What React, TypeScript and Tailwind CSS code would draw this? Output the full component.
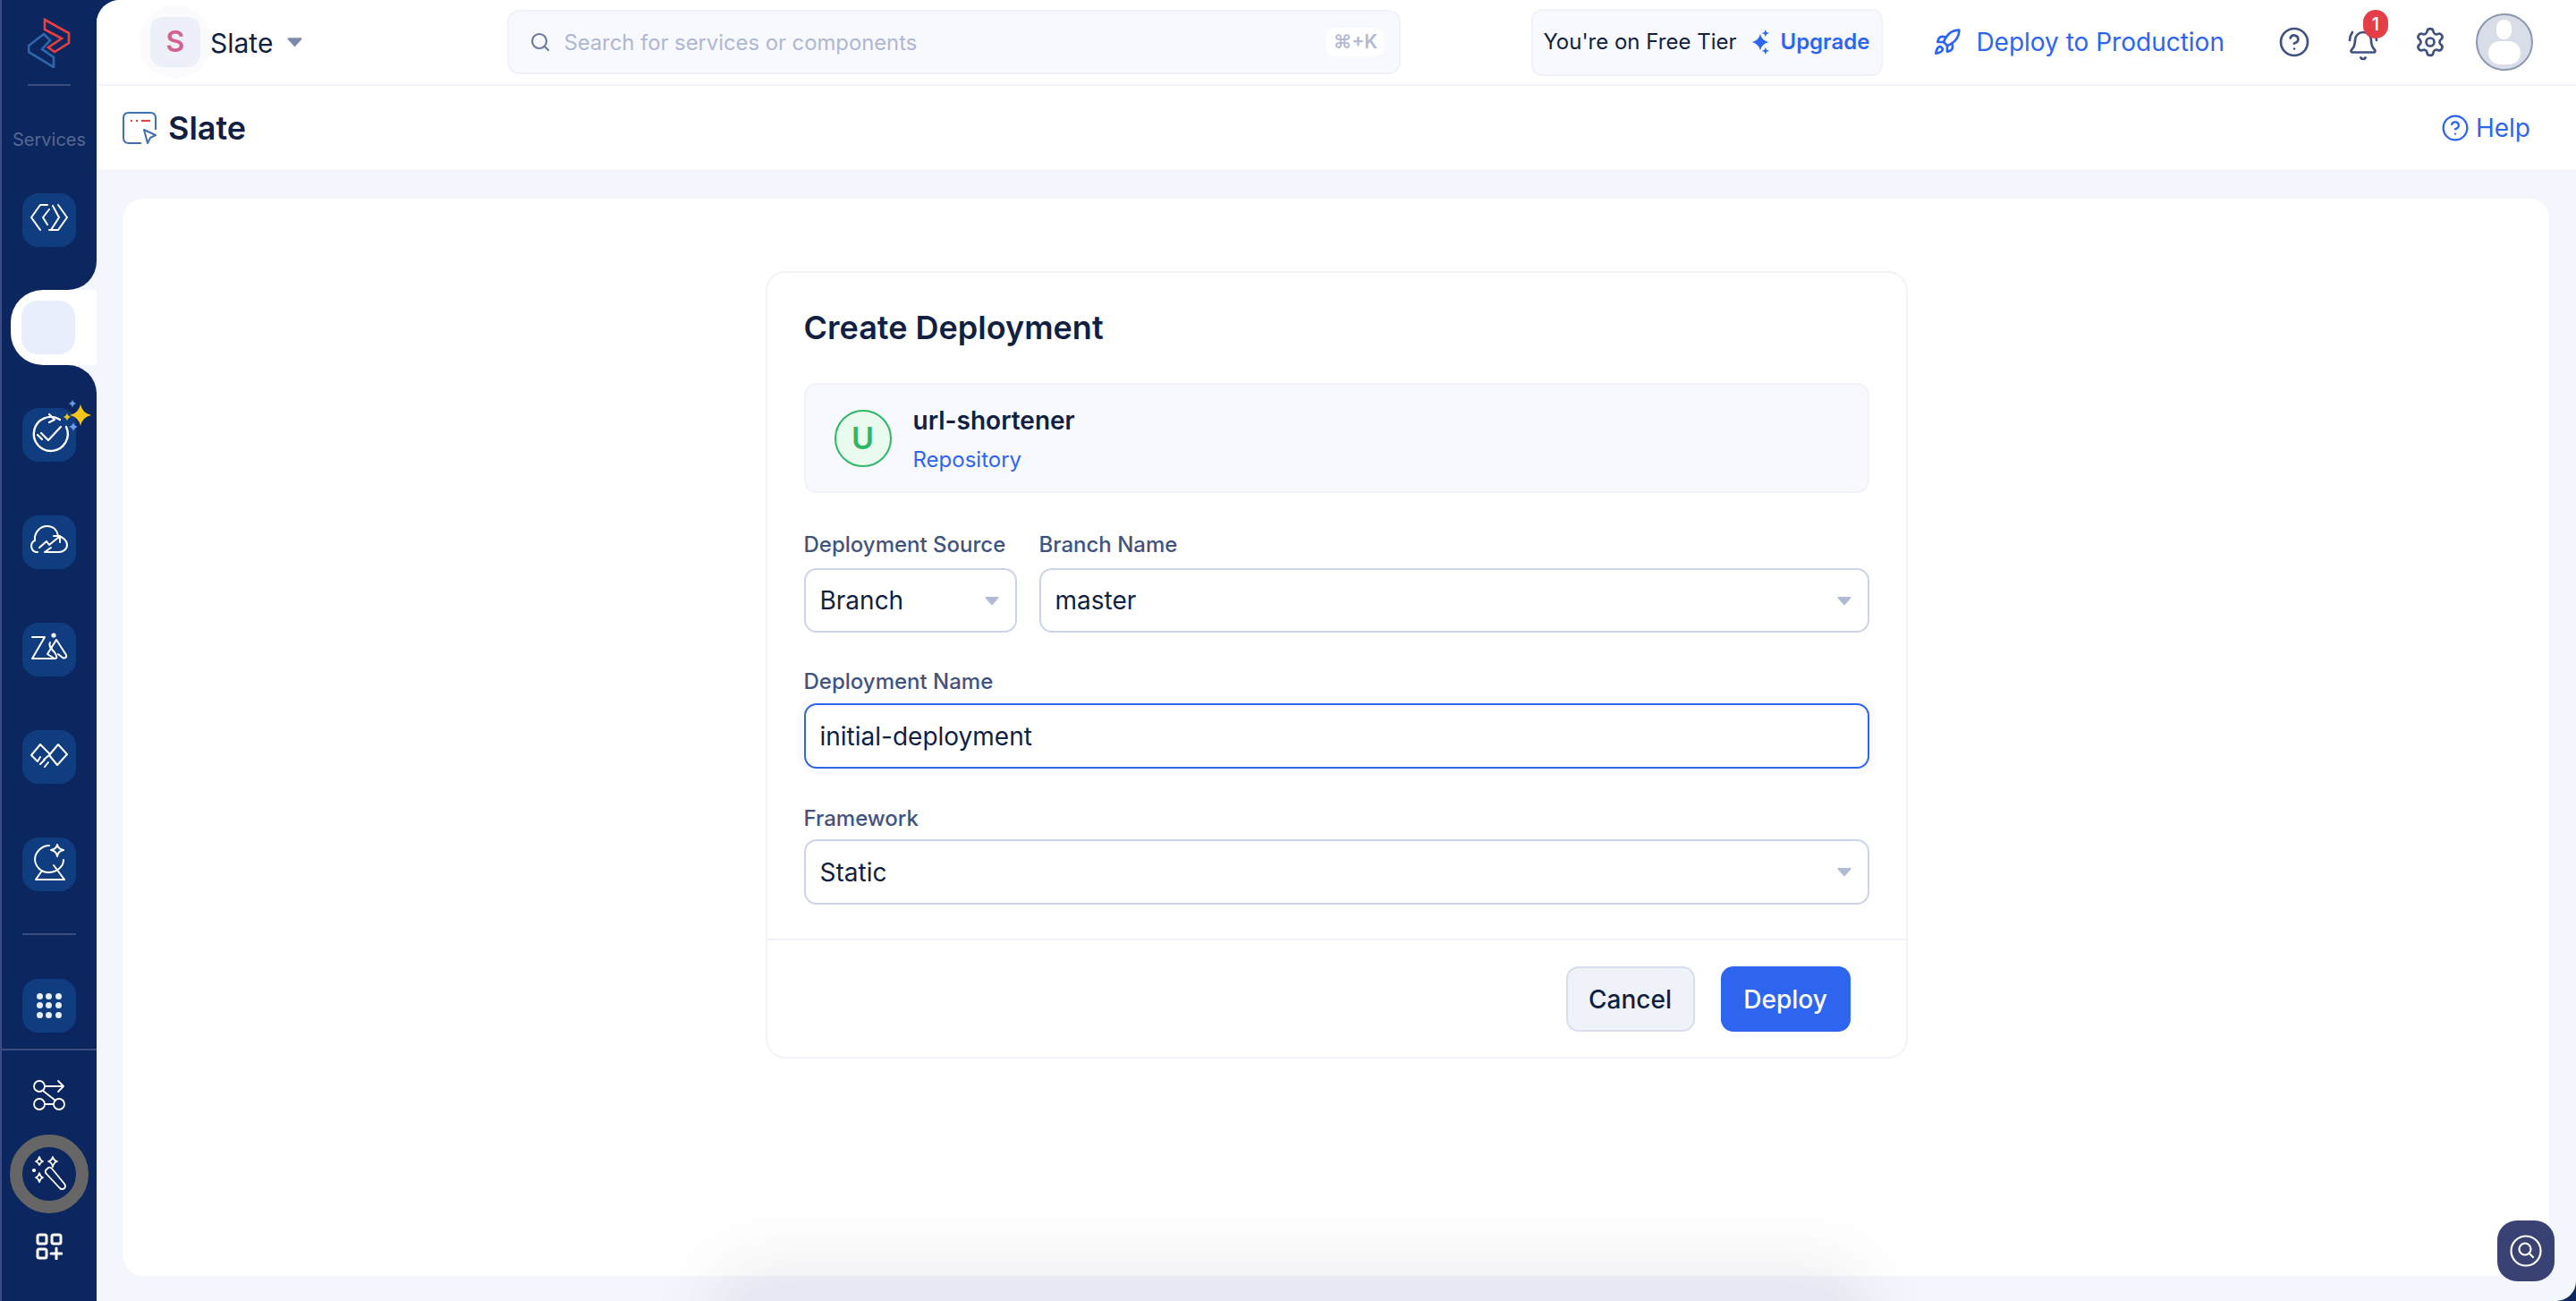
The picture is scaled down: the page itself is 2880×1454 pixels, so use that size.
import { BellRing, CircleHelp, Rocket, Search, Settings } from 'lucide-react'
import type { ReactNode } from 'react'

const Star = ({ cx, cy, r, fill }: { cx: number; cy: number; r: number; fill: string }) => (
  <path
    d={`M${cx} ${cy - r} Q${cx + r * 0.18} ${cy - r * 0.18} ${cx + r} ${cy} Q${cx + r * 0.18} ${cy + r * 0.18} ${cx} ${cy + r} Q${cx - r * 0.18} ${cy + r * 0.18} ${cx - r} ${cy} Q${cx - r * 0.18} ${cy - r * 0.18} ${cx} ${cy - r}Z`}
    fill={fill}
  />
)

const TileIcon = ({ children }: { children: ReactNode }) => (
  <svg
    viewBox="0 0 60 60"
    className="w-[60px] h-[60px]"
    fill="none"
    stroke="#fff"
    strokeWidth="2"
    strokeLinecap="round"
    strokeLinejoin="round"
  >
    {children}
  </svg>
)

const Tile = ({ children, className = '' }: { children: ReactNode; className?: string }) => (
  <div className={`w-[60px] h-[60px] rounded-[18px] bg-[#0f3d80] ${className}`}>
    <TileIcon>{children}</TileIcon>
  </div>
)

const Caret = ({ className }: { className: string }) => (
  <svg viewBox="0 0 16 11" className={className}>
    <path d="M1.5 1h13a1 1 0 0 1 .8 1.6L8.8 9.8a1 1 0 0 1-1.6 0L.7 2.6A1 1 0 0 1 1.5 1Z" fill="currentColor" />
  </svg>
)

const Sidebar = () => (
  <aside className="w-[106px] h-full shrink-0 flex flex-col bg-[#f4f6fd]">
    <div className="h-[324px] bg-[#0c275f] rounded-br-[32px] flex flex-col items-center">
      <svg viewBox="0 0 48 56" className="w-[48px] h-[56px] mt-[20px]" fill="none" strokeWidth="2.6" strokeLinejoin="miter">
        <path d="M19 2 L46 17 V28 L30 38 L23 33 L38 23 L19 13Z" stroke="#e8403f" />
        <path d="M18 18 L1 31 V38 L29 55 V44 L16 35 L25 25Z" stroke="#2f69ad" />
      </svg>
      <div className="w-[48px] h-[2px] bg-[#3c4c7e] mt-[18px]" />
      <div className="text-[20px] leading-[26px] text-[#55688f] mt-[47px]">Services</div>
      <Tile className="mt-[47px]">
        <path d="M28 13 H20 L10 27 L20 41 M30 18 L23 27 L28 35" />
        <path d="M30 41 H40 L50 27 L40 13 M34 14 L41 27 L32 41" />
      </Tile>
    </div>

    {/* active tab */}
    <div className="h-[84px] bg-[#0c275f] pl-[10px] shrink-0">
      <div className="h-full bg-white rounded-l-[36px] flex items-center pl-[12px]">
        <div className="w-[60px] h-[60px] rounded-[18px] bg-[#e8eefb]" />
      </div>
    </div>

    <div className="flex-1 bg-[#0c275f] rounded-tr-[32px] flex flex-col items-center relative">
      <div className="relative mt-[48px]">
        <Tile>
          <path d="M42 13 A19 19 0 1 0 49 21" strokeWidth="2.4" />
          <path d="M30 7 L36 13 L30 16" strokeWidth="2.2" />
          <path d="M17 30 L22 35 M21 28 L29 36 L43 21" strokeWidth="2.2" />
        </Tile>
        <svg viewBox="0 0 40 50" className="absolute top-[-14px] left-[44px] w-[40px] h-[50px]">
          <Star cx={21} cy={22} r={12} fill="#f5c518" />
          <Star cx={6} cy={24} r={4.5} fill="#f5c518" />
          <Star cx={12} cy={9} r={4.5} fill="#6c9bea" />
          <Star cx={13} cy={35} r={5} fill="#6c9bea" />
        </svg>
      </div>
      <Tile className="mt-[60px]">
        <path d="M17 41 H15 A7 7 0 0 1 14 28 C13 20 19 12 28 12 C35 12 39 17 40 23 C45 24 50 28 50 33 C50 38 45 41 41 41 H25 L32 36" />
        <path d="M19 36 L27 29 L30 33 L41 24 M35 23 H42 V30" />
      </Tile>
      <Tile className="mt-[60px]">
        <path d="M11 16 H25 L11 40 H36 C40 40 38 36 36 33 C31 28 29 25 31 22" />
        <circle cx="35" cy="14" r="1.6" fill="#fff" />
        <path d="M36 40 L28 35 L38 19 L49 36 C50 39 47 40 45 39 L40 35" />
      </Tile>
      <Tile className="mt-[60px]">
        <path d="M20 16 L10 28 L17 35 M20 16 L31 27 L24 33 M17 35 L20 30 M20 38 L25 33 M25 41 L29 36" />
        <path d="M40 16 L50 27 L39 39 L30 28Z" />
      </Tile>
      <Tile className="mt-[60px]">
        <path d="M30 9 C21 9 14 17 14 25 C15 33 21 39 29 39 C38 39 46 33 46 25" />
        <path d="M22 37 L15 47 H47 L35 31" />
        <path d="M39 8 Q40 13 46 14 Q40 15 39 21 Q38 15 32 14 Q38 13 39 8Z" />
      </Tile>
      <div className="w-[60px] h-[2px] bg-[#3c4c7e] mt-[47px]" />
      <div className="w-[60px] h-[60px] rounded-[18px] bg-[#0f3d80] mt-[49px] grid grid-cols-3 gap-[3px] p-[16px]">
        {[0, 1, 2, 3, 4, 5, 6, 7, 8].map((i) => (
          <div key={i} className="w-[7px] h-[7px] rounded-full bg-[#e8eefb]" />
        ))}
      </div>
      <div className="w-full h-[2px] bg-[#3c4c7e] mt-[18px]" />
      <svg viewBox="0 0 36 36" className="w-[36px] h-[36px] mt-[32px]" fill="none" stroke="#fff" strokeWidth="1.8" strokeLinecap="round" strokeLinejoin="round">
        <circle cx="7" cy="8" r="6" />
        <circle cx="7" cy="28" r="6" />
        <circle cx="29" cy="28" r="6" />
        <path d="M13 8 H33 M28 2 L34 8 L28 14 M11 13 L25 24 M13 28 H23" />
      </svg>
      <div className="w-[88px] h-[88px] rounded-full border-[14px] border-[#666666] bg-[#0c275f] flex items-center justify-center mt-[26px]">
        <svg viewBox="0 0 40 40" className="w-[40px] h-[40px]" fill="none" stroke="#fff" strokeWidth="1.8" strokeLinejoin="round">
          <path d="M16 16 L19 13 Q21 12 23 14 L37 31 Q39 34 37 36 Q34 38 32 36 L17 20 Q15 18 16 16Z" />
          <path d="M9 1 Q10 5 13 6 Q10 7 9 10 Q8 7 5 6 Q8 5 9 1Z" />
          <path d="M24 1 Q25 5 29 6 Q25 7 24 12 Q23 7 19 6 Q23 5 24 1Z" />
          <path d="M9 19 Q10 23 13 24 Q10 25 9 29 Q8 25 5 24 Q8 23 9 19Z" />
          <circle cx="3" cy="16" r="1.2" />
        </svg>
      </div>
      <svg viewBox="0 0 30 30" className="w-[30px] h-[30px] mt-[22px]" fill="none" stroke="#fff" strokeWidth="3" strokeLinecap="round" strokeLinejoin="round">
        <rect x="2" y="2" width="10" height="10" rx="2" />
        <rect x="18" y="2" width="10" height="10" rx="2" />
        <rect x="2" y="18" width="10" height="10" rx="2" />
        <path d="M23 17 V29 M17 23 H29" />
      </svg>
    </div>
  </aside>
)

const Header = () => (
  <header className="h-[96px] shrink-0 border-b-2 border-[#f1f2fa] flex items-center">
    <div className="ml-[47px] w-[82px] h-[82px] rounded-full bg-[#fbfbfe] flex items-center justify-center">
      <div className="w-[56px] h-[56px] rounded-[14px] bg-[#eef0f9] flex items-center justify-center text-[32px] font-semibold text-[#d4608f]">
        S
      </div>
    </div>
    <span className="text-[30px] text-[#111f42] -ml-[2px] mt-[2px]">Slate</span>
    <Caret className="w-[17px] h-[12px] ml-[16px] text-[#7d8aac]" />
    <div className="ml-[229px] w-[999px] h-[72px] rounded-[14px] bg-[#f8f9fe] border-2 border-[#f0f2fa] flex items-center pl-[23px] pr-[17px]">
      <Search className="w-[24px] h-[24px] text-[#6d7a9c]" strokeWidth={2.2} />
      <span className="ml-[14px] mt-[2px] text-[23.8px] text-[#aeb7d3]">Search for services or components</span>
      <span className="ml-auto w-[64px] h-[32px] rounded-[10px] bg-white flex items-center justify-center text-[21px] font-semibold text-[#b0bad4]">
        ⌘+K
      </span>
    </div>
    <div className="ml-[146px] w-[393px] h-[75px] rounded-[12px] bg-[#f8f9fe] border-2 border-[#f0f2fa] flex items-center pl-[11px]">
      <span className="text-[24px] text-[#111f42]">You're on Free Tier</span>
      <svg viewBox="0 0 24 24" className="w-[28px] h-[28px] ml-[13px]" fill="#2d65f0">
        <path d="M12 4 Q13 10 20 12 Q13 14 12 20 Q11 14 4 12 Q11 10 12 4Z" />
        <path d="M17 0 L18 2.5 L20.5 3.5 L18 4.5 L17 7 L16 4.5 L13.5 3.5 L16 2.5Z" />
        <path d="M17 17 L18 19.5 L20.5 20.5 L18 21.5 L17 24 L16 21.5 L13.5 20.5 L16 19.5Z" />
      </svg>
      <span className="ml-[8px] text-[24px] font-semibold text-[#2d65f0]">Upgrade</span>
    </div>
    <Rocket className="ml-[56px] w-[32px] h-[32px] text-[#2d65f0]" strokeWidth={2} />
    <span className="ml-[16px] text-[28px] text-[#2d65f0]">Deploy to Production</span>
    <CircleHelp className="ml-[60px] w-[36px] h-[36px] text-[#3f5280]" strokeWidth={1.8} />
    <div className="ml-[41px] relative w-[36px] h-[36px] mt-[8px]">
      <BellRing className="w-[36px] h-[36px] text-[#3f5280]" strokeWidth={1.8} />
      <div className="absolute -top-[22px] left-[18px] w-[28px] h-[32px] rounded-full bg-[#e53e48] text-white text-[20px] font-medium flex items-center justify-center">
        1
      </div>
    </div>
    <Settings className="ml-[39px] w-[36px] h-[36px] text-[#3f5280]" strokeWidth={1.8} />
    <div className="ml-[33px] w-[64px] h-[64px] rounded-full bg-[#d9dde8] border-2 border-[#8c97b3] flex flex-col items-center justify-center overflow-hidden">
      <div className="w-[17px] h-[22px] rounded-full bg-white" />
      <div className="w-[36px] h-[26px] rounded-full bg-white mt-[2px]" />
    </div>
  </header>
)

const Select = ({ value, className = '' }: { value: string; className?: string }) => (
  <div className={`rounded-[14px] border-2 border-[#ccd4ea] bg-white flex items-center justify-between pl-[16px] pr-[18px] text-[28px] text-[#111f42] ${className}`}>
    <span>{value}</span>
    <Caret className="w-[16px] h-[11px] text-[#b0bad4]" />
  </div>
)

const App = () => {
  return (
    <div className="relative h-screen overflow-hidden flex bg-[#0c275f] border-l-2 border-[#3d4c80] font-[Inter,'DejaVu_Sans',sans-serif]">
      <Sidebar />
      <main className="flex-1 h-full flex flex-col bg-[#f4f6fd] rounded-tl-[26px] rounded-br-[22px] overflow-hidden">
        <div className="bg-white">
          <Header />
          <div className="h-[96px] border-b-2 border-[#f1f2fa] flex items-center justify-between pl-[29px] pr-[51px]">
            <div className="flex items-center">
              <svg viewBox="0 0 38 36" className="w-[38px] h-[36px]" fill="none">
                <path d="M21 35 H7 Q1 35 1 29 V7 Q1 1 7 1 H31 Q37 1 37 7 V20" stroke="#3f6fb0" strokeWidth="2" />
                <path d="M9 10 H11 M15 10 H17 M21 10 H31" stroke="#e8403f" strokeWidth="2.2" />
                <path d="M24 20 L37 26 L31 29 L28 35 Z" stroke="#3f6fb0" strokeWidth="2" strokeLinejoin="round" />
              </svg>
              <span className="ml-[13px] text-[36px] font-semibold text-[#111f42]">Slate</span>
            </div>
            <div className="flex items-center text-[28px] text-[#2d65f0]">
              <CircleHelp className="w-[32px] h-[32px]" strokeWidth={1.7} />
              <span className="ml-[7px]">Help</span>
            </div>
          </div>
        </div>

        <div className="flex-1 mx-[30px] mb-[28px] mt-[30px] bg-white rounded-[22px] pt-[81px]">
          <section className="w-[1277px] mx-auto border-2 border-[#f1f2fa] rounded-[22px]">
            <div className="px-[41px] pt-[39px]">
              <h1 className="h-[44px] leading-[44px] text-[36px] font-semibold text-[#111f42]">Create Deployment</h1>
              <div className="mt-[40px] h-[123px] rounded-[14px] bg-[#f8f9fe] border-2 border-[#f1f2fa] flex items-center pl-[32px]">
                <div className="w-[64px] h-[64px] rounded-full bg-[#e8fbee] border-2 border-[#2fb768] flex items-center justify-center text-[34px] font-semibold text-[#2fb768]">
                  U
                </div>
                <div className="ml-[24px] pt-[2px]">
                  <div className="text-[28px] leading-[36px] font-semibold text-[#111f42]">url-shortener</div>
                  <div className="text-[24px] leading-[30px] mt-[11px] text-[#2d65f0]">Repository</div>
                </div>
              </div>
              <div className="mt-[43px] flex gap-[25px]">
                <div className="w-[238px]">
                  <label className="block h-[30px] leading-[30px] text-[24px] font-medium text-[#41537f] whitespace-nowrap">Deployment Source</label>
                  <Select value="Branch" className="mt-[11px] h-[72px]" />
                </div>
                <div className="flex-1">
                  <label className="block h-[30px] leading-[30px] text-[24px] font-medium text-[#41537f]">Branch Name</label>
                  <Select value="master" className="mt-[11px] h-[72px]" />
                </div>
              </div>
              <label className="block mt-[40px] h-[30px] leading-[30px] text-[24px] font-medium text-[#41537f]">Deployment Name</label>
              <div className="mt-[9px] h-[73px] rounded-[14px] border-2 border-[#2d65f0] bg-white shadow-[0_0_0_8px_#fafbfe] flex items-center pl-[16px] text-[28px] text-[#111f42]">
                initial-deployment
              </div>
              <label className="block mt-[41px] h-[30px] leading-[30px] text-[24px] font-medium text-[#41537f]">Framework</label>
              <Select value="Static" className="mt-[8px] h-[73px]" />
            </div>
            <div className="mt-[38px] border-t-2 border-[#f1f2fa] flex justify-end gap-[29px] pt-[29px] pb-[28px] pr-[62px]">
              <button className="w-[144px] h-[73px] rounded-[14px] bg-[#f0f2fa] border-2 border-[#d8def0] text-[28px] font-medium text-[#111f42]">
                Cancel
              </button>
              <button className="w-[145px] h-[73px] rounded-[14px] bg-[#2d65f0] text-[28px] font-medium text-white">
                Deploy
              </button>
            </div>
          </section>
        </div>
      </main>

      {/* shadow from something sitting below the fold */}
      <div className="absolute left-[820px] top-[1440px] w-[1240px] h-[200px] rounded-[30px] bg-[#dcdfe8] shadow-[0_0_70px_20px_rgba(60,70,100,0.18)] opacity-60 pointer-events-none" />

      <button className="absolute left-[2790px] top-[1364px] w-[64px] h-[68px] rounded-[22px] bg-[#394272] flex items-center justify-center">
        <svg viewBox="0 0 36 36" className="w-[36px] h-[36px]" fill="none" stroke="#fff" strokeWidth="2.2" strokeLinecap="round">
          <circle cx="18" cy="18" r="16.5" />
          <circle cx="17" cy="16" r="6.5" />
          <path d="M22 21 L26 25" />
        </svg>
      </button>
    </div>
  )
}

export default App
